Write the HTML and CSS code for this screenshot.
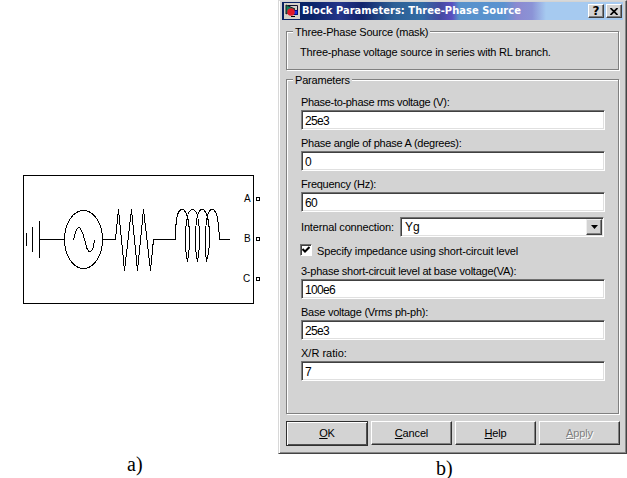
FILE: index.html
```html
<!DOCTYPE html>
<html lang="en">
<head>
<meta charset="utf-8">
<title>Three-Phase Source</title>
<link rel="stylesheet" href="styles.css">
</head>
<body>
<main class="page">
  <figure class="block-figure">
    <svg class="circuit" width="270" height="140" viewBox="0 170 270 140" fill="none" stroke="#000" stroke-width="1" shape-rendering="crispEdges">
      <rect x="23.5" y="175.5" width="230" height="128"/>
      <path d="M26.500 233V246M32.500 227V252M39.500 221V258M39 239.500H64"/>
      <ellipse cx="83.500" cy="239.500" rx="19" ry="29"/>
      <path d="M73.500 240C75 232 77 227.500 79 227.500C82 227.500 84 238 86 245C87 250 88 251.500 90 251.500C93 251.500 94 245 94.500 240"/>
      <path d="M103 239.500H115.500L118.500 209.500L124.500 270.500L131.500 209.500L137.500 270.500L143.500 209.500L150.500 270.500L153.500 239.500H175.500"/>
      <path d="M175.500 239.500C175.500 220 177 209.500 182 209.500C187 209.500 189.500 222 189.500 240C189.500 250 188.500 256 187.500 261.500C186 256 185.500 248 185.500 240C185.500 221 187.500 209.500 192.500 209.500C197.500 209.500 199.500 222 199.500 240C199.500 250 198.500 256 197.500 261.500C196 256 195.500 248 195.500 240C195.500 221 197 209.500 202 209.500C207 209.500 209.500 222 209.500 240C209.500 250 208 256 206.500 261.500C205.500 256 205.500 248 205.500 240C205.500 221 207 209.500 212 209.500C217 209.500 218.500 220 219.500 239.500H230"/>
      <path d="M256.500 197.500h3v3h-3zM256.500 237.500h3v3h-3zM256.500 277.500h3v3h-3z"/>
      <g class="port-name">
        <text x="244" y="202">A</text>
        <text x="244" y="242">B</text>
        <text x="243" y="282">C</text>
      </g>
    </svg>
    <figcaption class="caption">a)</figcaption>
  </figure>

  <figure class="dialog-figure">
    <section class="dialog">
      <header class="titlebar">
        <svg class="app-icon" width="16" height="16" viewBox="0 0 16 16">
          <rect width="16" height="16" fill="#d4d0c8"/>
          <path d="M2 2L11 6L2 11Z" fill="#108060" stroke="#102020"/>
          <path d="M4 2.500H13.500V9" fill="none" stroke="#101030"/>
          <rect x="9.500" y="7.500" width="4" height="4" fill="#2030e0" stroke="#001080"/>
          <circle cx="7" cy="9" r="3.800" fill="#e01828"/>
          <path d="M7 13.500H11" stroke="#000"/>
        </svg>
        <h1 class="title">Block Parameters: Three-Phase Source</h1>
        <button class="caption-button" aria-label="Help">?</button>
        <button class="caption-button" aria-label="Close">
          <svg width="8" height="7" viewBox="0 0 8 7"><path d="M.5 0L7.500 7M7.500 0L.5 7" stroke="#000" stroke-width="1.700"/></svg>
        </button>
      </header>

      <fieldset class="group about">
        <legend>Three-Phase Source (mask)</legend>
        <p class="description">Three-phase voltage source in series with RL branch.</p>
      </fieldset>

      <fieldset class="group parameters">
        <legend>Parameters</legend>
        <div class="fields">
          <label class="field"><span class="tight">Phase-to-phase rms voltage (V):</span><input value="25e3"></label>
          <label class="field"><span>Phase angle of phase A (degrees):</span><input value="0"></label>
          <label class="field"><span>Frequency (Hz):</span><input value="60"></label>
          <div class="connection">
            <span class="loose">Internal connection:</span>
            <div class="select"><span>Yg</span>
              <span class="arrow"><svg width="7" height="4" viewBox="0 0 7 4"><path d="M0 0H7L3.500 4Z"/></svg></span>
            </div>
          </div>
          <div class="check">
            <span class="box"><svg width="8" height="8" viewBox="0 0 8 8"><path d="M.5 3L3 5.500L7.500 1" fill="none" stroke="#000" stroke-width="2"/></svg></span>
            <span class="check-label loose">Specify impedance using short-circuit level</span>
          </div>
          <label class="field"><span>3-phase short-circuit level at base voltage(VA):</span><input value="100e6"></label>
          <label class="field"><span>Base voltage (Vrms ph-ph):</span><input value="25e3"></label>
          <label class="field"><span class="natural">X/R ratio:</span><input value="7"></label>
        </div>
      </fieldset>

      <footer class="actions">
        <button class="button default"><span><u>O</u>K</span></button>
        <button class="button"><span><u>C</u>ancel</span></button>
        <button class="button"><span><u>H</u>elp</span></button>
        <button class="button disabled"><span><u>A</u>pply</span></button>
      </footer>
    </section>
    <figcaption class="caption">b)</figcaption>
  </figure>
</main>
</body>
</html>
```
FILE: styles.css
```css
* { box-sizing: border-box; }

body {
  margin: 0;
  background: #fff;
  color: #000;
  font: 11px/13px "Liberation Sans", Arial, sans-serif;
  overflow: hidden;
}

figure, h1, p { margin: 0; }

.page {
  display: grid;
  grid-template-columns: 278px 349px;
  height: 478px;
}

.caption {
  font: 20px/22px "Liberation Serif", "Times New Roman", serif;
}

.block-figure { padding-top: 170px; }
.circuit { display: block; }
.port-name { fill: #000; stroke: none; font-size: 10px; }
.block-figure .caption { margin: 143px 0 0 127px; }
.dialog-figure .caption { margin: 5px 0 0 158px; line-height: 18px; }

.dialog {
  display: flex;
  flex-direction: column;
  height: 454px;
  padding: 1px 3px 7px 2px;
  background: #d3d3d3;
  border: 1px solid #d8d8d8;
  border-right-color: #444;
  border-bottom-color: #444;
  box-shadow: inset 1px 0 #fff, inset -1px -1px #888;
}

.titlebar {
  display: flex;
  align-items: center;
  height: 18px;
  margin-left: 1px;
  padding: 0 1px 0 2px;
  background: linear-gradient(90deg, #08205f 0, #0a246a 30px, #25358a 58px, #12246d 80px, #2c6095 112px, #326ba4 140px, #4449a0 158px, #5a50c0 170px, #5791cb 177px, #5b93d0 222px, #8c89d0 235px, #8b93d6 250px, #a6caf0 264px);
}

.title {
  flex: 1;
  margin-left: 2px;
  color: #fff;
  font: bold 11px/16px "DejaVu Sans Condensed", "DejaVu Sans", sans-serif;
  font-stretch: condensed;
  letter-spacing: .05px;
  white-space: nowrap;
}

.caption-button {
  display: grid;
  place-items: center;
  width: 16px;
  height: 14px;
  margin-left: 2px;
  padding: 0;
  background: #d3d3d3;
  border: 1px solid;
  border-color: #fff #404040 #404040 #fff;
  box-shadow: inset -1px -1px #808080;
  font: bold 12px/12px "DejaVu Sans", sans-serif;
}

.group {
  min-width: 0;
  margin: 0 4px 0 5px;
  padding: 0;
  border: 1px solid #808080;
  box-shadow: 1px 1px #fff, inset 1px 1px #fff;
}

.group legend {
  height: 11px;
  margin-left: 6px;
  padding: 0 2px;
  background: #d3d3d3;
  letter-spacing: -.2px;
}

.about { height: 44px; margin-top: 6px; }
.parameters { height: 340px; margin-top: 4px; }
.description { margin: 9px 0 0 13px; letter-spacing: -.18px; }

.fields {
  display: flex;
  flex-direction: column;
  gap: 5px;
  margin: 9px 14px 0;
  letter-spacing: -.25px;
}
.tight { letter-spacing: -.32px; }
.loose { letter-spacing: -.16px; }
.natural { letter-spacing: 0; }

.field { display: block; height: 36px; }
.field > span { display: block; height: 16px; padding-top: 2px; }

.field input, .select {
  height: 20px;
  background: #fff;
  border: 1px solid;
  border-color: #707070 #fff #fff #808080;
  box-shadow: inset 1px 1px #404040, inset -1px -1px #e0e0e0;
}

.field input {
  display: block;
  width: 304px;
  padding: 1px 3px 0;
  border-radius: 0;
  font: 12px/15px "Liberation Sans", Arial, sans-serif;
  letter-spacing: -.65px;
}

.connection { display: flex; align-items: center; height: 20px; }
.select {
  display: flex;
  align-items: center;
  justify-content: space-between;
  width: 204px;
  margin-left: auto;
  padding: 1px 1px 1px 4px;
  font-size: 12px;
  letter-spacing: 0;
}
.arrow {
  display: grid;
  place-items: center;
  width: 16px;
  height: 16px;
  background: #d3d3d3;
  border: 1px solid;
  border-color: #eee #404040 #404040 #eee;
  box-shadow: inset -1px -1px #808080;
}

.check { display: flex; align-items: center; gap: 5px; height: 16px; margin-left: -1px; }
.check-label { padding-top: 2px; }
.box {
  display: grid;
  place-items: center;
  width: 12px;
  height: 12px;
  background: #fff;
  border: 1px solid;
  border-color: #707070 #fff #fff #707070;
  box-shadow: inset 1px 1px #404040;
}

.actions {
  display: grid;
  grid-template-columns: 82px 81px 81px 81px;
  gap: 3px;
  height: 25px;
  margin: 7px 4px 0 5px;
}

.button {
  height: 24px;
  padding: 0;
  background: #d3d3d3;
  border: 1px solid;
  border-color: #fff #303030 #303030 #fff;
  border-radius: 0;
  box-shadow: inset -1px -1px #808080;
  color: #000;
  font: 11px/13px "Liberation Sans", Arial, sans-serif;
  letter-spacing: -.15px;
}
.default {
  height: 25px;
  border-color: #303030;
  box-shadow: inset 1px 1px #fff, inset -1px -1px #505050;
}
.disabled { color: #808080; text-shadow: 1px 1px #fff; }
```
